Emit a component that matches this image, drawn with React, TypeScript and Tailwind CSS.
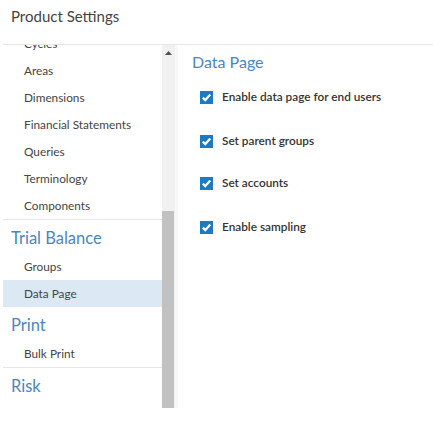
import React from "react";

const Sub = ({ label, active }: { label: string; active?: boolean }) => (
  <div
    className={`h-[27px] flex items-center pl-[21px] text-[11.8px] font-normal text-[#444] ${
      active ? "bg-[#dce9f5]" : ""
    }`}
  >
    {label}
  </div>
);

const Head = ({ label }: { label: string }) => (
  <div className="h-[33px] flex items-center pt-[3px] pl-[8px] text-[16.5px] text-[#4a86c3]">
    {label}
  </div>
);

const Check = ({ label, className }: { label: string; className?: string }) => (
  <div className={`flex items-center h-[20px] ${className ?? ""}`}>
    <div className="w-[13px] h-[13px] bg-[#1d7ac0] flex items-center justify-center">
      <svg width="11" height="11" viewBox="0 0 11 11">
        <path d="M1.8 5.6 L4.3 8.1 L9.3 2.6" stroke="white" strokeWidth="2.2" fill="none" />
      </svg>
    </div>
    <span className="ml-[9px] text-[11.8px] font-semibold text-[#333]">{label}</span>
  </div>
);

export default function App() {
  return (
    <div className="w-[433px] h-[426px] bg-white font-['Lato',sans-serif] overflow-hidden">
      <div className="h-[44px] pl-[11px] pt-[6px] text-[15px] leading-[20px] text-[#444]">
        Product Settings
      </div>
      <div className="ml-[3px] border-t border-[#e6e6e6] flex">
        <div className="w-[159px] h-[363px] overflow-hidden">
          <div className="-mt-[15px]">
            <Sub label="Cycles" />
            <Sub label="Areas" />
            <Sub label="Dimensions" />
            <Sub label="Financial Statements" />
            <Sub label="Queries" />
            <Sub label="Terminology" />
            <div className="border-b border-[#e6e6e6]">
              <Sub label="Components" />
            </div>
            <Head label="Trial Balance" />
            <Sub label="Groups" />
            <Sub label="Data Page" active />
            <Head label="Print" />
            <div className="border-b border-[#e6e6e6]">
              <Sub label="Bulk Print" />
            </div>
            <Head label="Risk" />
          </div>
        </div>
        <div className="w-[13px] h-[363px] bg-[#f1f1f1] flex flex-col">
          <div className="h-[16px] flex items-center justify-center">
            <svg width="7" height="4" viewBox="0 0 7 4">
              <path d="M0 4 L3.5 0 L7 4 Z" fill="#505050" />
            </svg>
          </div>
          <div className="mt-[150px] w-[12px] h-[197px] bg-[#c1c1c1]" />
        </div>
        <div className="w-[3px] h-[363px] bg-[#f8f8f8]" />
        <div className="pl-[14px] flex flex-col">
          <div className="pt-[6px] text-[16px] leading-[22px] text-[#4a86c3]">Data Page</div>
          <div className="pl-[8px]">
            <Check label="Enable data page for end users" className="mt-[14px]" />
            <Check label="Set parent groups" className="mt-[24px]" />
            <Check label="Set accounts" className="mt-[22px]" />
            <Check label="Enable sampling" className="mt-[24px]" />
          </div>
        </div>
      </div>
    </div>
  );
}
